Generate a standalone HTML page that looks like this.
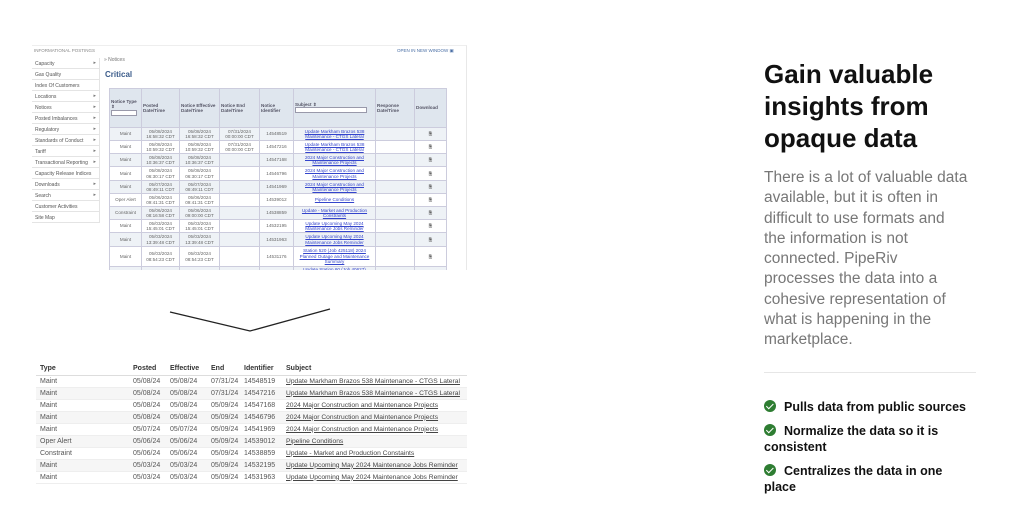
<!DOCTYPE html><html><head><style>
*{margin:0;padding:0;box-sizing:border-box}
body{width:1024px;height:512px;background:#fff;font-family:"Liberation Sans",sans-serif;position:relative;overflow:hidden}
.a{position:absolute}
.sb div{height:11px;border-bottom:1px solid #e4e4e4;font-size:5px;color:#555;padding:3px 0 0 3px;position:relative}
.sb div.s:after{content:"▸";position:absolute;right:3px;top:2px;font-size:5px;color:#777}
table{border-collapse:collapse}
.t1 td,.t1 th{border:1px solid #ccd;font-size:4.6px;color:#666;text-align:center;padding:0 1px;line-height:5.5px}
.t1 th{background:#dfe6ee;color:#556;font-weight:bold;text-align:left;vertical-align:middle}
.t1 tr:nth-child(even) td{background:#eef2f6}
.t1 a{color:#3344cc;text-decoration:underline}
.t2{table-layout:fixed}
.t2 td,.t2 th{font-size:7px;color:#555;text-align:left;height:12px;padding:0 4px;border-bottom:1px solid #eee;white-space:nowrap;overflow:hidden}
.t2 th{color:#333;font-weight:bold;border-bottom:1px solid #ddd}
.t2 tr:nth-child(odd) td{background:#f6f6f6}
.t2 td u{color:#444;font-size:6.7px}
.ck{display:inline-block;width:12px;height:12px;border-radius:50%;background:#2e7d32;position:relative;vertical-align:-1px;margin-right:8px}
.ck:after{content:"";position:absolute;left:3.5px;top:2px;width:3px;height:5.5px;border:solid #fff;border-width:0 1.8px 1.8px 0;transform:rotate(45deg)}
</style></head><body>
<div class="a" style="left:32px;top:45px;width:435px;height:233px;border-right:1px solid #e8e8e8;border-top:1px solid #eee"></div>
<div class="a" style="left:34px;top:48px;font-size:4.5px;color:#888">INFORMATIONAL POSTINGS</div>
<div class="a" style="left:397px;top:48px;font-size:4.5px;color:#4a6fa5">OPEN IN NEW WINDOW ▣</div>
<div class="a sb" style="left:32px;top:58px;width:68px;border-right:1px solid #e4e4e4">
<div class="s">Capacity</div><div>Gas Quality</div><div>Index Of Customers</div><div class="s">Locations</div><div class="s">Notices</div><div class="s">Posted Imbalances</div><div class="s">Regulatory</div><div class="s">Standards of Conduct</div><div class="s">Tariff</div><div class="s">Transactional Reporting</div><div>Capacity Release Indices</div><div class="s">Downloads</div><div class="s">Search</div><div>Customer Activities</div><div>Site Map</div></div>
<div class="a" style="left:104px;top:57px;font-size:5px;color:#777">» Notices</div>
<div class="a" style="left:105px;top:70px;font-size:8px;color:#3a5b8a;font-weight:bold">Critical</div>
<table class="a t1" style="left:109px;top:88px;width:338px">
<tr style="height:39px"><th style="width:32px">Notice Type ⇕<br><span style="display:inline-block;width:26px;height:6px;border:1px solid #99a;background:#fff"></span></th><th style="width:38px">Posted Date/Time</th><th style="width:40px">Notice Effective Date/Time</th><th style="width:40px">Notice End Date/Time</th><th style="width:34px">Notice Identifier</th><th style="width:82px">Subject ⇕<br><span style="display:inline-block;width:72px;height:6px;border:1px solid #99a;background:#fff"></span></th><th style="width:39px">Response Date/Time</th><th>Download</th></tr>
<tr style="height:13px"><td>Maint</td><td>05/08/2024<br>16:58:32 CDT</td><td>05/08/2024<br>16:58:32 CDT</td><td>07/31/2024<br>00:00:00 CDT</td><td>14548519</td><td><a>Update Markham Brazos 538<br>Maintenance - CTGS Lateral</a></td><td></td><td>🗎</td></tr>
<tr style="height:13px"><td>Maint</td><td>05/08/2024<br>10:59:32 CDT</td><td>05/08/2024<br>10:59:32 CDT</td><td>07/31/2024<br>00:00:00 CDT</td><td>14547216</td><td><a>Update Markham Brazos 538<br>Maintenance - CTGS Lateral</a></td><td></td><td>🗎</td></tr>
<tr style="height:13px"><td>Maint</td><td>05/08/2024<br>10:36:37 CDT</td><td>05/08/2024<br>10:36:37 CDT</td><td></td><td>14547168</td><td><a>2024 Major Construction and<br>Maintenance Projects</a></td><td></td><td>🗎</td></tr>
<tr style="height:14px"><td>Maint</td><td>05/08/2024<br>06:30:17 CDT</td><td>05/08/2024<br>06:30:17 CDT</td><td></td><td>14546796</td><td><a>2024 Major Construction and<br>Maintenance Projects</a></td><td></td><td>🗎</td></tr>
<tr style="height:13px"><td>Maint</td><td>05/07/2024<br>08:49:11 CDT</td><td>05/07/2024<br>08:49:11 CDT</td><td></td><td>14541969</td><td><a>2024 Major Construction and<br>Maintenance Projects</a></td><td></td><td>🗎</td></tr>
<tr style="height:13px"><td>Oper Alert</td><td>05/06/2024<br>09:41:31 CDT</td><td>05/06/2024<br>09:41:31 CDT</td><td></td><td>14539012</td><td><a>Pipeline Conditions</a></td><td></td><td>🗎</td></tr>
<tr style="height:13px"><td>Constraint</td><td>05/06/2024<br>08:16:58 CDT</td><td>05/06/2024<br>09:00:00 CDT</td><td></td><td>14538859</td><td><a>Update - Market and Production<br>Constraints</a></td><td></td><td>🗎</td></tr>
<tr style="height:13px"><td>Maint</td><td>05/03/2024<br>15:45:01 CDT</td><td>05/03/2024<br>15:45:01 CDT</td><td></td><td>14532195</td><td><a>Update Upcoming May 2024<br>Maintenance Jobs Reminder</a></td><td></td><td>🗎</td></tr>
<tr style="height:14px"><td>Maint</td><td>05/03/2024<br>13:39:48 CDT</td><td>05/03/2024<br>13:39:48 CDT</td><td></td><td>14531963</td><td><a>Update Upcoming May 2024<br>Maintenance Jobs Reminder</a></td><td></td><td>🗎</td></tr>
<tr style="height:20px"><td>Maint</td><td>05/03/2024<br>08:54:23 CDT</td><td>05/03/2024<br>08:54:23 CDT</td><td></td><td>14531176</td><td><a>Station 520 (Job 425118) 2024<br>Planned Outage and Maintenance<br>Summary</a></td><td></td><td>🗎</td></tr>
<tr style="height:4px"><td></td><td></td><td></td><td></td><td></td><td style="overflow:hidden"><a>Update Station 60 (Job 40627)</a></td><td></td><td></td></tr>
</table>
<div class="a" style="left:32px;top:270px;width:436px;height:10px;background:#fff"></div>
<svg class="a" style="left:0;top:0" width="1024" height="512"><polyline points="170,312 250,331 330,309" fill="none" stroke="#222" stroke-width="1.3"/></svg>
<table class="a t2" style="left:36px;top:363px;width:431px">
<tr><th style="width:93px">Type</th><th style="width:37px">Posted</th><th style="width:41px">Effective</th><th style="width:33px">End</th><th style="width:42px">Identifier</th><th>Subject</th></tr>
<tr><td>Maint</td><td>05/08/24</td><td>05/08/24</td><td>07/31/24</td><td>14548519</td><td><u>Update Markham Brazos 538 Maintenance - CTGS Lateral</u></td></tr>
<tr><td>Maint</td><td>05/08/24</td><td>05/08/24</td><td>07/31/24</td><td>14547216</td><td><u>Update Markham Brazos 538 Maintenance - CTGS Lateral</u></td></tr>
<tr><td>Maint</td><td>05/08/24</td><td>05/08/24</td><td>05/09/24</td><td>14547168</td><td><u>2024 Major Construction and Maintenance Projects</u></td></tr>
<tr><td>Maint</td><td>05/08/24</td><td>05/08/24</td><td>05/09/24</td><td>14546796</td><td><u>2024 Major Construction and Maintenance Projects</u></td></tr>
<tr><td>Maint</td><td>05/07/24</td><td>05/07/24</td><td>05/09/24</td><td>14541969</td><td><u>2024 Major Construction and Maintenance Projects</u></td></tr>
<tr><td>Oper Alert</td><td>05/06/24</td><td>05/06/24</td><td>05/09/24</td><td>14539012</td><td><u>Pipeline Conditions</u></td></tr>
<tr><td>Constraint</td><td>05/06/24</td><td>05/06/24</td><td>05/09/24</td><td>14538859</td><td><u>Update - Market and Production Constaints</u></td></tr>
<tr><td>Maint</td><td>05/03/24</td><td>05/03/24</td><td>05/09/24</td><td>14532195</td><td><u>Update Upcoming May 2024 Maintenance Jobs Reminder</u></td></tr>
<tr><td>Maint</td><td>05/03/24</td><td>05/03/24</td><td>05/09/24</td><td>14531963</td><td><u>Update Upcoming May 2024 Maintenance Jobs Reminder</u></td></tr>
</table>
<div class="a" style="left:764px;top:58px;width:220px;font-size:26px;line-height:32px;font-weight:bold;color:#111">Gain valuable insights from opaque data</div>
<div class="a" style="left:764px;top:168px;width:240px;font-size:15.5px;line-height:20.3px;color:#777;white-space:nowrap">There is a lot of valuable data<br>available, but it is often in<br>difficult to use formats and<br>the information is not<br>connected. PipeRiv<br>processes the data into a<br>cohesive representation of<br>what is happening in the<br>marketplace.</div>
<div class="a" style="left:764px;top:372px;width:212px;border-top:1px solid #e6e6e6"></div>
<div class="a" style="left:764px;top:399px;width:240px;font-size:12.5px;line-height:16.5px;font-weight:bold;color:#111;white-space:nowrap">
<div style="margin-bottom:7px"><span class="ck"></span>Pulls data from public sources</div>
<div style="margin-bottom:7px"><span class="ck"></span>Normalize the data so it is<br>consistent</div>
<div><span class="ck"></span>Centralizes the data in one<br>place</div></div>
</body></html>
